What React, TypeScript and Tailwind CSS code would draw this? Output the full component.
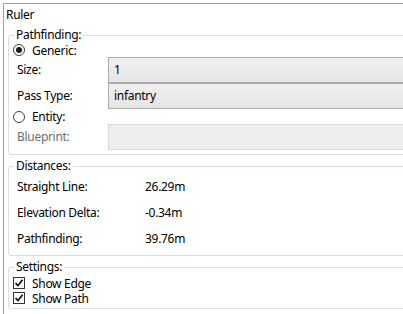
import React from "react";

const Radio = ({ checked }: { checked?: boolean }) => (
  <span className="flex h-[12px] w-[12px] items-center justify-center rounded-full border border-[#3c3c3c] bg-white">
    {checked && <span className="h-[6px] w-[6px] rounded-full bg-[#1a1a1a]" />}
  </span>
);

const Check = () => (
  <span className="flex h-[12px] w-[12px] items-center justify-center border border-[#333333] bg-white">
    <svg width="10" height="10" viewBox="0 0 10 10">
      <path d="M1.5 5.2 L4 7.6 L8.6 1.8" fill="none" stroke="#111" strokeWidth="1.7" />
    </svg>
  </span>
);

function Group({ title, children, className = "" }: { title: string; children: React.ReactNode; className?: string }) {
  return (
    <fieldset className={`ml-[4px] w-[430px] rounded-[3px] border border-[#d5dfe5] p-0 ${className}`}>
      <legend className="ml-[5px] h-[16px] px-[2px] leading-[16px]">{title}</legend>
      {children}
    </fieldset>
  );
}

const Combo = ({ value }: { value: string }) => (
  <div className="flex h-[26px] flex-1 items-center border border-[#acacac] bg-gradient-to-b from-[#f0f0f0] to-[#e5e5e5] pl-[5px]">
    {value}
  </div>
);

export default function App() {
  const distances = [
    ["Straight Line:", "26.29m"],
    ["Elevation Delta:", "-0.34m"],
    ["Pathfinding:", "39.76m"],
  ];

  return (
    <div className="h-[314px] w-[403px] overflow-hidden bg-white font-['Noto_Sans',sans-serif] text-[12px] leading-[16px] tracking-[-0.3px] text-black">
      <div className="ml-[3px] mt-[3px] h-[320px] border-l border-t border-[#a0a0a0] pl-0">
        <div className="pl-[2px] pt-[3px]">Ruler</div>

        {/* Pathfinding */}
        <Group title="Pathfinding:" className="mt-[4px] pb-[4px]">
          <div className="flex h-[14px] items-center gap-[7px] pl-[4px]">
            <Radio checked />
            <span className="mt-[2px] leading-[14px]">Generic:</span>
          </div>
          <div className="flex h-[26px] items-center pl-[8px]">
            <span className="w-[91px]">Size:</span>
            <Combo value="1" />
          </div>
          <div className="flex h-[26px] items-center pl-[8px]">
            <span className="w-[91px]">Pass Type:</span>
            <Combo value="infantry" />
          </div>
          <div className="flex h-[15px] items-center gap-[7px] pl-[4px]">
            <Radio />
            <span className="leading-[14px]">Entity:</span>
          </div>
          <div className="flex h-[26px] items-center pl-[8px]">
            <span className="w-[91px] text-[#6d6d6d]">Blueprint:</span>
            <div className="h-[26px] flex-1 border border-[#d9d9d9] bg-[#eeeeee]" />
          </div>
        </Group>

        {/* Distances */}
        <Group title="Distances:" className="mt-[3px] pb-[3px]">
          {distances.map(([label, value]) => (
            <div key={label} className="flex h-[26px] items-center pl-[8px]">
              <span className="w-[128px]">{label}</span>
              <span>{value}</span>
            </div>
          ))}
        </Group>

        {/* Settings */}
        <Group title="Settings:" className="mt-[3px] pb-[3px]">
          {["Show Edge", "Show Path"].map((label) => (
            <div key={label} className="flex h-[15px] items-center gap-[7px] pl-[4px]">
              <Check />
              <span className="mt-[2px] leading-[14px]">{label}</span>
            </div>
          ))}
        </Group>
      </div>
    </div>
  );
}
